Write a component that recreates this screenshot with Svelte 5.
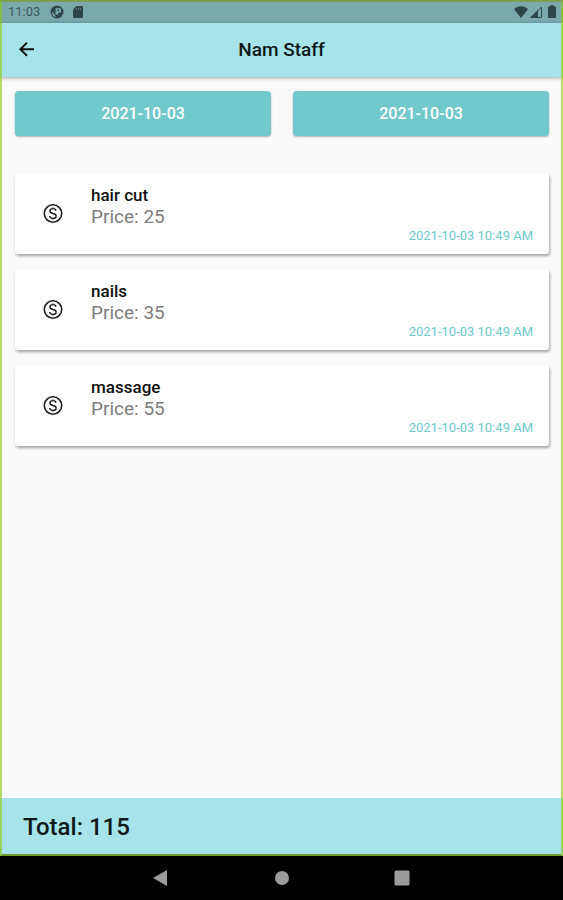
<script lang="ts">
  type Service = { name: string; price: number; time: string };

  let fromDate = $state('2021-10-03');
  let toDate = $state('2021-10-03');

  let services: Service[] = $state([
    { name: 'hair cut', price: 25, time: '2021-10-03 10:49 AM' },
    { name: 'nails', price: 35, time: '2021-10-03 10:49 AM' },
    { name: 'massage', price: 55, time: '2021-10-03 10:49 AM' }
  ]);

  let total = $derived(services.reduce((sum, s) => sum + s.price, 0));
</script>

<div class="device">
  <div class="screen">
    <div class="status-bar">
      <span class="clock">11:03</span>
      <svg class="status-icon" width="14" height="14" viewBox="0 0 14 14">
        <circle cx="7" cy="7" r="6.500" fill="#2f4649" />
        <path d="M5.500 3.200H11v4.300H8.200v2H5.500z" fill="#7ba9ad" />
        <path d="M7.200 4.800h2v1.200h-2z" fill="#2f4649" />
        <path d="M2 6.500L4.500 9.500 6 12C3.500 11.800 1.800 9.500 2 6.500z" fill="#7ba9ad" />
      </svg>
      <svg class="status-icon" width="10" height="12" viewBox="0 0 10 12">
        <path d="M3.500 0H9a1 1 0 0 1 1 1v10a1 1 0 0 1-1 1H1a1 1 0 0 1-1-1V3.500z" fill="#2f4649" />
        <path d="M3.500 2v2M5.500 2v2M7.500 2v2" stroke="#7ba9ad" stroke-width=".5" />
      </svg>
      <div class="status-right">
        <svg width="14" height="12" viewBox="0 0 14 12">
          <path d="M7 12L0 3.200C4-.6 10-.6 14 3.200z" fill="#2f4649" />
        </svg>
        <svg width="12" height="12" viewBox="0 0 12 12">
          <path d="M11.500 1v10.500H1z" fill="none" stroke="#2f4649" stroke-width="1" />
          <path d="M0 12L8 4v8z" fill="#2f4649" />
        </svg>
        <svg class="battery" width="8" height="13" viewBox="0 0 8 13">
          <path d="M2.500 0h3v1.500H7a1 1 0 0 1 1 1V12a1 1 0 0 1-1 1H1a1 1 0 0 1-1-1V2.500a1 1 0 0 1 1-1h1.500z" fill="#2f4649" />
        </svg>
      </div>
    </div>

    <header class="app-bar">
      <button class="back" aria-label="Back">
        <svg width="24" height="24" viewBox="0 0 24 24">
          <path d="M19 10.200H7.830l4.880-4.880L11.300 3.900 4 11.200l7.300 7.300 1.410-1.410L7.830 12.200H19z" fill="#111" />
        </svg>
      </button>
      <h1>Nam Staff</h1>
    </header>

    <main>
      <div class="dates">
        <button class="date" aria-label="From {fromDate}">{fromDate}</button>
        <button class="date" aria-label="To {toDate}">{toDate}</button>
      </div>

      <ul class="services">
        {#each services as service}
          <li class="card">
            <svg class="coin" width="22" height="22" viewBox="0 0 22 22" fill="none" stroke="#1c1c1c">
              <circle cx="11" cy="10.500" r="8.700" stroke-width="1.600" />
              <path d="M14 7.900c-.2-1.500-1.400-2.300-3-2.300-1.800 0-3.100.9-3.100 2.300 0 3.400 6.300 1.700 6.300 5.100 0 1.500-1.400 2.400-3.200 2.400s-3.100-.9-3.300-2.400M11 4.400v1.200M11 15.400v1.200" stroke-width="1.400" />
            </svg>
            <div class="details">
              <h2>{service.name}</h2>
              <p class="price">Price: {service.price}</p>
              <time>{service.time}</time>
            </div>
          </li>
        {/each}
      </ul>
    </main>

    <footer class="total">Total: {total}</footer>
  </div>

  <nav class="system-nav" aria-label="System navigation">
    <button aria-label="Back">
      <svg width="18" height="18" viewBox="0 0 18 18"><path d="M0 9L14 1v16z" fill="#9b9b9b" /></svg>
    </button>
    <button aria-label="Home">
      <svg width="18" height="18" viewBox="0 0 18 18"><circle cx="9" cy="9" r="7" fill="#9b9b9b" /></svg>
    </button>
    <button aria-label="Recent apps">
      <svg width="18" height="18" viewBox="0 0 18 18"><rect x="1.500" y="1.500" width="15" height="15" rx="1.500" fill="#9b9b9b" /></svg>
    </button>
  </nav>
</div>

<style>
  :global(body) {
    margin: 0;
    background: #000;
    font-family: Roboto, "Noto Sans", sans-serif;
  }

  h1, h2, p, ul {
    margin: 0;
    padding: 0;
  }

  button {
    border: none;
    background: none;
    padding: 0;
    font: inherit;
    cursor: pointer;
  }

  svg {
    display: block;
  }

  .device {
    display: flex;
    flex-direction: column;
    min-height: 100vh;
  }

  .screen {
    position: relative;
    flex: 1;
    display: flex;
    flex-direction: column;
    background: #fafafa;
  }

  /* focus frame drawn over the whole app */
  .screen::after {
    content: '';
    position: absolute;
    inset: 0;
    z-index: 2;
    border: 2px solid rgba(140, 205, 0, 0.6);
    border-top-color: rgba(124, 156, 40, 0.7);
    border-bottom-color: rgba(100, 140, 0, 0.8);
    pointer-events: none;
  }

  .status-bar {
    display: flex;
    align-items: center;
    height: 23px;
    padding: 0 7px 0 8px;
    background: #7ba9ad;
    color: #3f5b5e;
    font-size: 13px;
    line-height: 23px;
  }

  .clock {
    margin-right: 10px;
  }

  .status-icon {
    margin-right: 9px;
  }

  .status-right {
    display: flex;
    align-items: center;
    gap: 2px;
    margin-left: auto;
  }

  .battery {
    margin-left: 4px;
  }

  .app-bar {
    position: relative;
    z-index: 1;
    display: grid;
    grid-template-columns: 24px 1fr 24px;
    align-items: center;
    height: 54px;
    padding: 0 15px;
    background: #a6e3ea;
    box-shadow: 0 1px 4px rgba(0, 0, 0, 0.35);
  }

  h1 {
    color: #10191a;
    font-size: 19px;
    font-weight: 500;
    line-height: 24px;
    text-align: center;
  }

  main {
    flex: 1;
    padding: 14px 14px 16px 15px;
  }

  .dates {
    display: grid;
    grid-template-columns: 1fr 1fr;
    gap: 22px;
  }

  .date {
    height: 45px;
    border-radius: 4px;
    background: #72c9cd;
    color: #fff;
    font-size: 16px;
    font-weight: 500;
    box-shadow: 0 1px 2px rgba(0, 0, 0, 0.3);
  }

  .services {
    display: flex;
    flex-direction: column;
    gap: 15px;
    margin-top: 37px;
    list-style: none;
  }

  .card {
    display: flex;
    align-items: center;
    gap: 27px;
    min-height: 81px;
    padding: 0 16px 0 27px;
    border-radius: 3px;
    background: #fff;
    box-shadow: 1px 2px 3px rgba(0, 0, 0, 0.35);
  }

  .coin {
    flex: none;
  }

  .details {
    flex: 1;
    display: flex;
    flex-direction: column;
  }

  h2 {
    color: #111;
    font-size: 17px;
    font-weight: 500;
    line-height: 22px;
  }

  .price {
    color: #7d7d7d;
    font-size: 19px;
    line-height: 22px;
  }

  time {
    align-self: flex-end;
    color: #6fc9cb;
    font-size: 13px;
    line-height: 15px;
  }

  .total {
    padding: 14px 23px;
    background: #a6e3ea;
    color: #10191a;
    font-size: 24px;
    font-weight: 500;
    line-height: 30px;
  }

  .system-nav {
    display: flex;
    justify-content: center;
    align-items: center;
    gap: 102px;
    height: 44px;
    background: #000;
  }
</style>
